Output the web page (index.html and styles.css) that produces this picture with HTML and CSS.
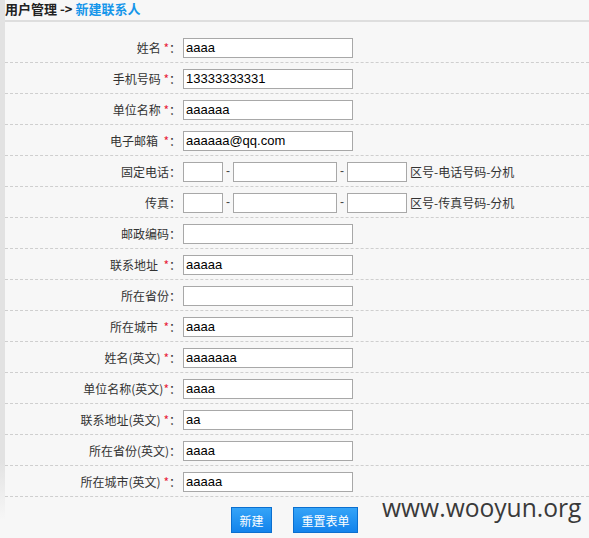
FILE: index.html
```html
<!DOCTYPE html>
<html lang="zh-CN">
<head>
<meta charset="utf-8">
<title>新建联系人</title>
<link rel="stylesheet" href="styles.css">
</head>
<body>
<div class="page">
  <div class="strip"></div>
  <div class="main">
    <div class="crumb"><span class="crumb-parent">用户管理 -&gt;</span> <span class="crumb-current">新建联系人</span></div>
    <form class="form">
      <div class="row"><label class="lbl">姓名 <span class="req">*</span>：</label><div class="fld"><input class="txt" value="aaaa"></div></div>
      <div class="row"><label class="lbl">手机号码 <span class="req">*</span>：</label><div class="fld"><input class="txt" value="13333333331"></div></div>
      <div class="row"><label class="lbl">单位名称 <span class="req">*</span>：</label><div class="fld"><input class="txt" value="aaaaaa"></div></div>
      <div class="row"><label class="lbl">电子邮箱 &nbsp;<span class="req">*</span>：</label><div class="fld"><input class="txt" value="aaaaaa@qq.com"></div></div>
      <div class="row"><label class="lbl">固定电话：</label><div class="fld"><input class="txt w-area"><span class="sep">-</span><input class="txt w-num"><span class="sep">-</span><input class="txt w-ext"><span class="hint">区号-电话号码-分机</span></div></div>
      <div class="row"><label class="lbl">传真：</label><div class="fld"><input class="txt w-area"><span class="sep">-</span><input class="txt w-num"><span class="sep">-</span><input class="txt w-ext"><span class="hint">区号-传真号码-分机</span></div></div>
      <div class="row"><label class="lbl">邮政编码：</label><div class="fld"><input class="txt"></div></div>
      <div class="row"><label class="lbl">联系地址 &nbsp;<span class="req">*</span>：</label><div class="fld"><input class="txt" value="aaaaa"></div></div>
      <div class="row"><label class="lbl">所在省份：</label><div class="fld"><input class="txt"></div></div>
      <div class="row"><label class="lbl">所在城市 &nbsp;<span class="req">*</span>：</label><div class="fld"><input class="txt" value="aaaa"></div></div>
      <div class="row"><label class="lbl">姓名(英文) <span class="req">*</span>：</label><div class="fld"><input class="txt" value="aaaaaaa"></div></div>
      <div class="row"><label class="lbl">单位名称(英文)<span class="req">*</span>：</label><div class="fld"><input class="txt" value="aaaa"></div></div>
      <div class="row"><label class="lbl">联系地址(英文) <span class="req">*</span>：</label><div class="fld"><input class="txt" value="aa"></div></div>
      <div class="row"><label class="lbl">所在省份(英文)：</label><div class="fld"><input class="txt" value="aaaa"></div></div>
      <div class="row"><label class="lbl">所在城市(英文) <span class="req">*</span>：</label><div class="fld"><input class="txt" value="aaaaa"></div></div>
      <div class="actions">
        <button type="button" class="btn btn-new">新建</button>
        <button type="button" class="btn btn-reset">重置表单</button>
      </div>
    </form>
  </div>
  <div class="watermark">www.wooyun.org</div>
</div>
</body>
</html>
```

FILE: styles.css
```css
html, body {
  margin: 0;
  padding: 0;
  background: #f7f7f7;
}
body {
  font-family: "Noto Sans CJK SC", "Liberation Sans", sans-serif;
  font-size: 12px;
  color: #333;
}
.page {
  position: relative;
  display: flex;
  width: 589px;
  height: 538px;
  overflow: hidden;
}
.strip {
  width: 5px;
  flex: none;
  background: linear-gradient(to bottom, #e2e2e2 0, #e2e2e2 460px, #f7f7f7 520px);
}
.main {
  flex: 1;
  min-width: 0;
}
.crumb {
  box-sizing: border-box;
  height: 22px;
  padding-top: 0;
  line-height: 18px;
  font-size: 13px;
  font-weight: bold;
  border-bottom: 2px solid #dedede;
  white-space: nowrap;
}
.crumb-parent { color: #222; }
.crumb-current { color: #1596ea; }
.form {
  margin: 10px 0 0;
}
.row {
  display: flex;
  align-items: center;
  height: 30px;
  border-bottom: 1px dashed #cfcfcf;
}
.lbl {
  width: 176px;
  flex: none;
  text-align: right;
  padding-right: 2px;
  white-space: nowrap;
  color: #333;
}
.req { color: #e8203a; }
.fld {
  display: flex;
  align-items: center;
}
.txt {
  box-sizing: border-box;
  width: 170px;
  height: 20px;
  margin: 1px 0 0;
  padding: 0 2px;
  border: 1px solid #a8a8a8;
  background: #fff;
  font-family: "Liberation Sans", Arial, sans-serif;
  font-size: 13px;
  color: #000;
  outline: none;
}
.w-area { width: 40px; }
.w-num { width: 104px; }
.w-ext { width: 60px; }
.sep {
  width: 10px;
  text-align: center;
  color: #444;
  font-family: "Liberation Sans", Arial, sans-serif;
}
.hint {
  margin-left: 3px;
  color: #333;
}
.actions {
  display: flex;
  justify-content: center;
  gap: 21px;
  padding-top: 10px;
  padding-right: 5px;
}
.btn {
  box-sizing: border-box;
  height: 26px;
  padding: 0;
  border: 1px solid #0b6fcf;
  background: linear-gradient(to bottom, #35a4f8, #1283ec);
  color: #fff;
  font-family: "Noto Sans CJK SC", sans-serif;
  font-size: 12px;
  cursor: pointer;
}
.btn-new { width: 41px; }
.btn-reset { width: 65px; }
.watermark {
  position: absolute;
  left: 382px;
  top: 491px;
  font-family: "Open Sans", "Noto Sans", sans-serif;
  font-size: 24.6px;
  color: #3a3a3a;
  white-space: nowrap;
}
```
